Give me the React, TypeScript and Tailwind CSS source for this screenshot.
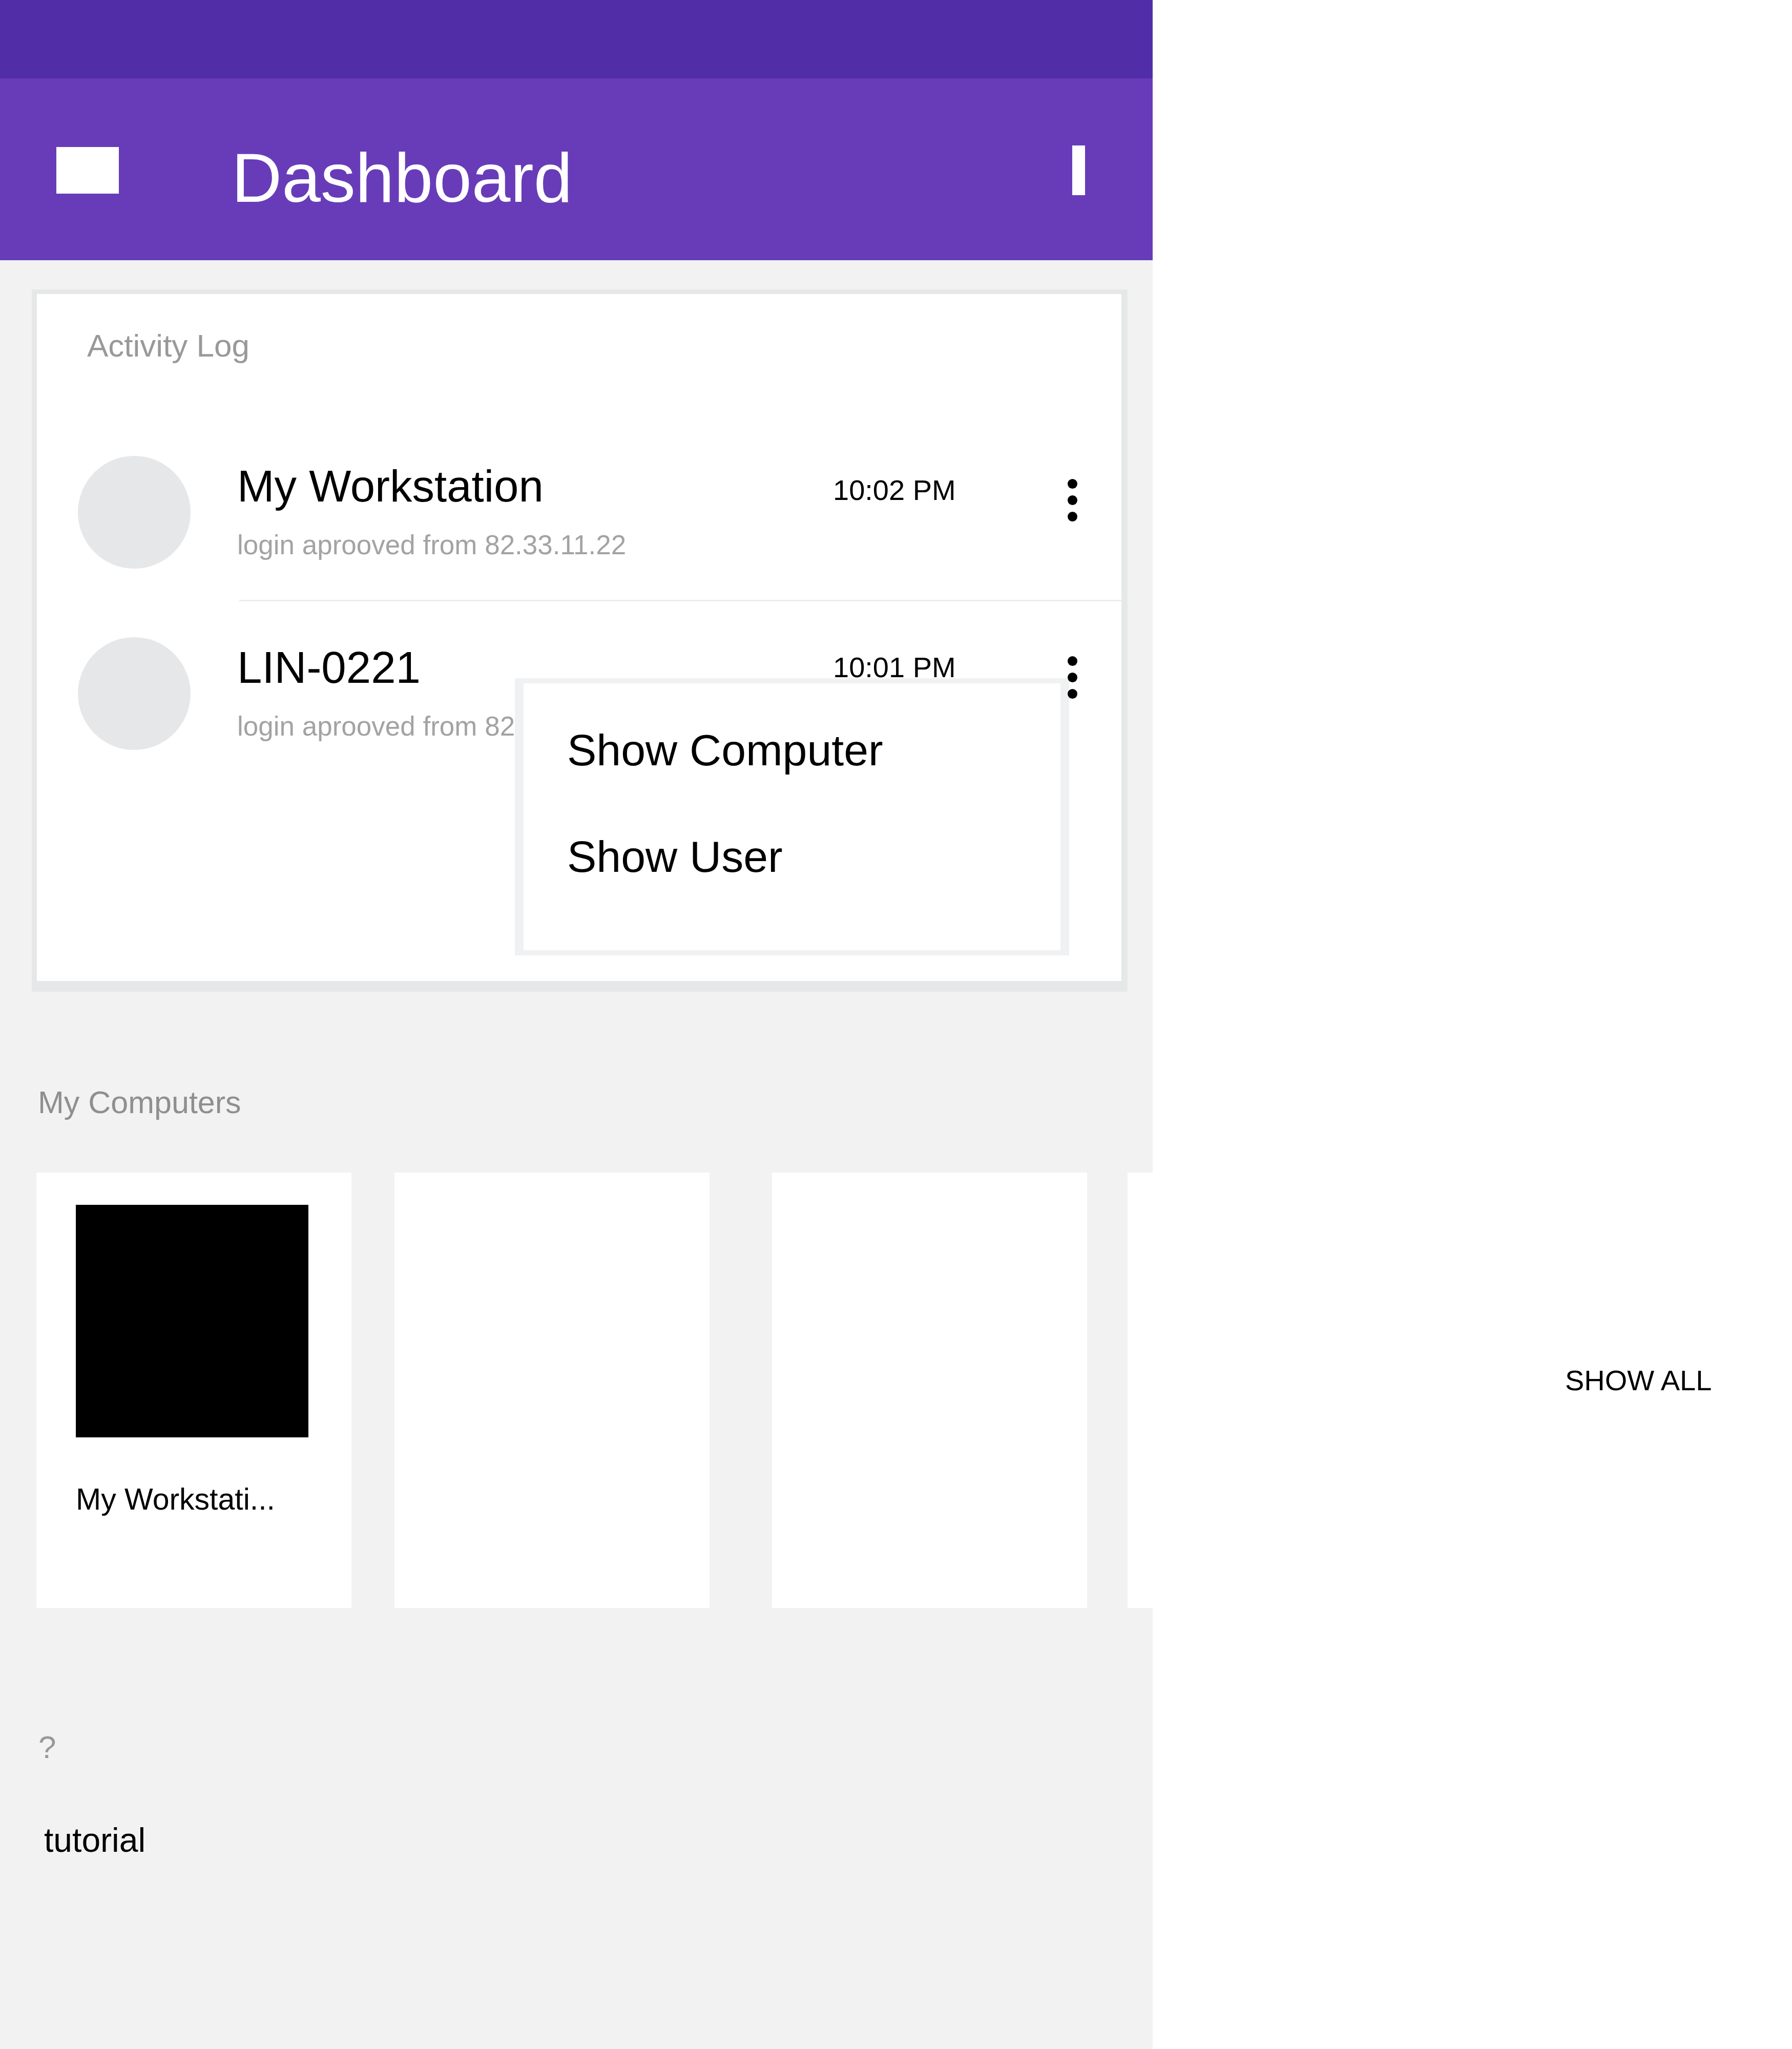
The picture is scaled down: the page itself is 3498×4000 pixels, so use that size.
import React from "react";

const font = { fontFamily: '"Liberation Sans", Arial, sans-serif' };

function Dots() {
  return (
    <div className="flex w-[20px] flex-col items-center gap-[13px]">
      <span className="h-[19px] w-[19px] rounded-full bg-black" />
      <span className="h-[19px] w-[19px] rounded-full bg-black" />
      <span className="h-[19px] w-[19px] rounded-full bg-black" />
    </div>
  );
}

interface LogRowProps {
  name: string;
  detail: string;
  time: string;
  raised?: boolean;
}

function LogRow({ name, detail, time, raised }: LogRowProps) {
  return (
    <div className="flex h-[281px] items-start">
      <div className="ml-[80px] h-[220px] w-[220px] shrink-0 rounded-full bg-[#e6e7e8]" />
      <div className="ml-[91px] mt-[15px] w-[1163px] shrink-0">
        <div className="text-[87px] leading-none text-black">{name}</div>
        <div className="mt-[45px] whitespace-nowrap text-[53px] leading-none text-[#a3a3a3]">
          {detail}
        </div>
      </div>
      <div
        className={
          "w-[457px] shrink-0 text-[56px] leading-none text-black " +
          (raised ? "mt-[31px]" : "mt-[39px]")
        }
      >
        {time}
      </div>
      <div className={"relative z-20 " + (raised ? "mt-[37px]" : "mt-[45px]")}>
        <Dots />
      </div>
    </div>
  );
}

function ComputerCard({
  className,
  label,
}: {
  className: string;
  label?: string;
}) {
  return (
    <div className={"h-[850px] w-[615px] shrink-0 bg-white " + className}>
      {label && (
        <div className="pl-[77px] pt-[63px]">
          <div className="h-[454px] w-[454px] bg-black" />
          <div className="mt-[92px] text-[59px] leading-none text-black">
            {label}
          </div>
        </div>
      )}
    </div>
  );
}

export default function App() {
  return (
    <div className="flex min-h-[4000px] w-[3498px] bg-white" style={font}>
      {/* phone column */}
      <div className="flex h-[4000px] w-[2250px] shrink-0 flex-col overflow-hidden bg-[#f1f2f1]">
        <div className="h-[153px] bg-[#512da8]" />
        <header className="flex h-[355px] items-start bg-[#683cb8]">
          <div className="ml-[110px] mt-[134px] h-[91px] w-[122px] bg-white" />
          <h1 className="ml-[220px] mt-[126px] text-[136px] leading-none text-white">
            Dashboard
          </h1>
          <div className="ml-auto mr-[132px] mt-[131px] h-[97px] w-[25px] bg-white" />
        </header>

        {/* activity log card */}
        <div className="ml-[62px] mt-[57px] w-[2139px] border-b-[21px] border-l-[10px] border-r-[12px] border-t-[9px] border-[#e6e7e8]">
          <div className="relative h-[1341px] bg-white">
            <div className="pl-[98px] pt-[70px] text-[62px] leading-none text-[#999999]">
              Activity Log
            </div>
            <div className="mt-[184px]">
              <LogRow
                name="My Workstation"
                detail="login aprooved from 82.33.11.22"
                time="10:02 PM"
              />
              <div className="ml-[395px] h-[3px] bg-[#eceded]" />
              <div className="mt-[70px]">
                <LogRow
                  name="LIN-0221"
                  detail="login aprooved from 82.33.11.22"
                  time="10:01 PM"
                  raised
                />
              </div>
            </div>

            {/* popup menu */}
            <div className="absolute left-[933px] top-[750px] z-10 h-[541px] w-[1082px] border-x-[17px] border-y-[10px] border-[#f0f1f2] bg-white">
              <div className="pl-[85px] pt-[87px] text-[86px] leading-none text-black">
                <div>Show Computer</div>
                <div className="mt-[122px]">Show User</div>
              </div>
            </div>
          </div>
        </div>

        <div className="ml-[74px] mt-[186px] text-[61px] leading-none text-[#8f8f8f]">
          My Computers
        </div>
        <div className="mt-[106px] flex">
          <ComputerCard className="ml-[71px]" label="My Workstati..." />
          <ComputerCard className="ml-[84px]" />
          <ComputerCard className="ml-[122px]" />
          <ComputerCard className="ml-[79px]" />
        </div>

        <div className="ml-[75px] mt-[241px] text-[62px] leading-none text-[#999999]">
          ?
        </div>
        <div className="ml-[86px] mt-[117px] text-[66px] leading-none text-black">
          tutorial
        </div>
      </div>

      {/* right side */}
      <div className="flex-1 pl-[805px] pt-[2667px]">
        <div className="text-[56px] leading-none text-black">SHOW ALL</div>
      </div>
    </div>
  );
}
